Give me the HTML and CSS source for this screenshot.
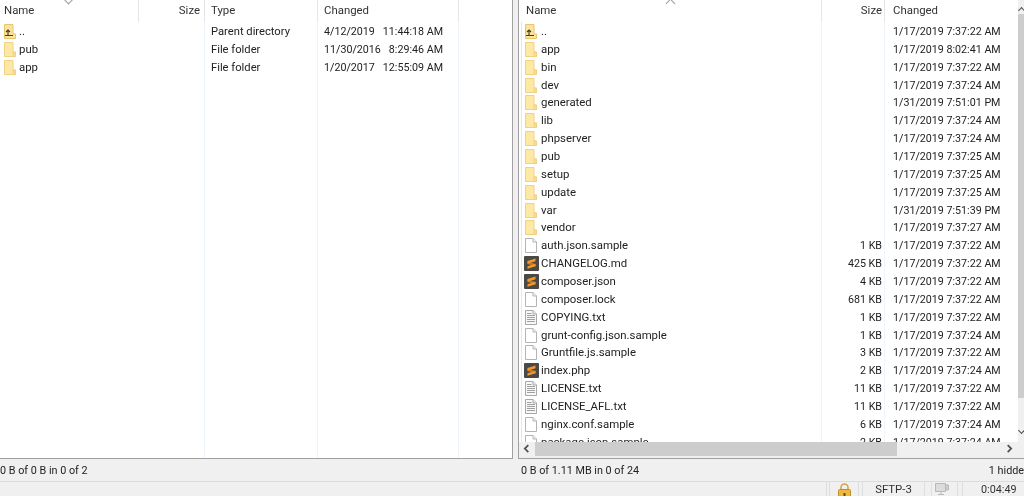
FILE: index.html
```html
<!DOCTYPE html>
<html lang="en">
<head>
  <meta charset="UTF-8" />
  <title>WinSCP</title>
  <link rel="stylesheet" href="styles.css">
</head>
<body>
<svg class="defs" width="0" height="0">
  <symbol id="folder" viewBox="0 0 15 15">
    <path d="M1.5.5h8.5v9.5h2.5v4.5h-11z" fill="#fde9a3" stroke="#f0d186"/>
    <path d="M10 10h2.5v4.5H10z" fill="#f8dd92" stroke="#f0d186"/>
  </symbol>
  <symbol id="folder-up" viewBox="0 0 15 15">
    <path d="M1.5.5h8.5v9.5h2.5v4.5h-11z" fill="#fde3a0" stroke="#e8c46c"/>
    <path d="M2 11.5h8M5 11.5V6M3 8l2-2 2 2" fill="none" stroke="#4a3a18" stroke-width="1.1"/>
  </symbol>
  <symbol id="file" viewBox="0 0 15 15">
    <path d="M1.5.5h7.5l3.5 3.5v10.500h-11z" fill="#fff" stroke="#b4b4b4"/>
    <path d="M9 .5V4h3.500" fill="#f2f2f2" stroke="#b4b4b4"/>
  </symbol>
  <symbol id="text" viewBox="0 0 15 15">
    <path d="M1.5.5h7.5l3.5 3.5v10.500h-11z" fill="#f8f8f8" stroke="#a8a8a8"/>
    <path d="M9 .5V4h3.500" fill="#eee" stroke="#a8a8a8"/>
    <path d="M3 3.500h4.500M3 5.500h8M3 7.500h8M3 9.500h8M3 11.500h8" stroke="#a0a0a0"/>
  </symbol>
  <symbol id="sublime" viewBox="0 0 15 15">
    <rect width="15" height="15" rx="1" fill="#4b4946"/>
    <path d="M3.500 5.500l8 2.500v2.400l-8-2.400z" fill="#c9771c"/>
    <path d="M3.500 5 11.500 2.500v2.700l-8 2.500zM11.500 7.800v2.400l-8 2.500v-2.500z" fill="#f3982c"/>
  </symbol>
  <symbol id="chev-left" viewBox="0 0 16 16">
    <path d="M9.500 3.500 5.500 7.500l4 4" fill="none" stroke="#505050" stroke-width="2"/>
  </symbol>
  <symbol id="chev-right" viewBox="0 0 16 16">
    <path d="M6.500 3.500l4 4-4 4" fill="none" stroke="#505050" stroke-width="2"/>
  </symbol>
</svg>

<div class="panels">
  <section class="pane pane-left">
    <span class="sort-caret"></span>
    <div class="head">
      <div class="col name">Name</div>
      <div class="col size">Size</div>
      <div class="col type">Type</div>
      <div class="col changed">Changed</div>
      <div class="col rest"></div>
    </div>
    <div class="list">
      <div class="row"><svg class="ico"><use href="#folder-up"/></svg><span class="name">..</span><span class="size"></span><span class="type">Parent directory</span><span class="changed">4/12/2019&nbsp;&nbsp; 11:44:18 AM</span></div>
      <div class="row"><svg class="ico"><use href="#folder"/></svg><span class="name">pub</span><span class="size"></span><span class="type">File folder</span><span class="changed">11/30/2016&nbsp;&nbsp; 8:29:46 AM</span></div>
      <div class="row"><svg class="ico"><use href="#folder"/></svg><span class="name">app</span><span class="size"></span><span class="type">File folder</span><span class="changed">1/20/2017&nbsp;&nbsp; 12:55:09 AM</span></div>
    </div>
  </section>

  <section class="pane pane-right">
    <span class="sort-caret"></span>
    <div class="main">
      <div class="head">
        <div class="col name">Name</div>
        <div class="col size">Size</div>
        <div class="col changed">Changed</div>
      </div>
      <div class="list">
        <div class="row"><svg class="ico"><use href="#folder-up"/></svg><span class="name">..</span><span class="size"></span><span class="changed">1/17/2019 7:37:22 AM</span></div>
        <div class="row"><svg class="ico"><use href="#folder"/></svg><span class="name">app</span><span class="size"></span><span class="changed">1/17/2019 8:02:41 AM</span></div>
        <div class="row"><svg class="ico"><use href="#folder"/></svg><span class="name">bin</span><span class="size"></span><span class="changed">1/17/2019 7:37:22 AM</span></div>
        <div class="row"><svg class="ico"><use href="#folder"/></svg><span class="name">dev</span><span class="size"></span><span class="changed">1/17/2019 7:37:24 AM</span></div>
        <div class="row"><svg class="ico"><use href="#folder"/></svg><span class="name">generated</span><span class="size"></span><span class="changed">1/31/2019 7:51:01 PM</span></div>
        <div class="row"><svg class="ico"><use href="#folder"/></svg><span class="name">lib</span><span class="size"></span><span class="changed">1/17/2019 7:37:24 AM</span></div>
        <div class="row"><svg class="ico"><use href="#folder"/></svg><span class="name">phpserver</span><span class="size"></span><span class="changed">1/17/2019 7:37:24 AM</span></div>
        <div class="row"><svg class="ico"><use href="#folder"/></svg><span class="name">pub</span><span class="size"></span><span class="changed">1/17/2019 7:37:25 AM</span></div>
        <div class="row"><svg class="ico"><use href="#folder"/></svg><span class="name">setup</span><span class="size"></span><span class="changed">1/17/2019 7:37:25 AM</span></div>
        <div class="row"><svg class="ico"><use href="#folder"/></svg><span class="name">update</span><span class="size"></span><span class="changed">1/17/2019 7:37:25 AM</span></div>
        <div class="row"><svg class="ico"><use href="#folder"/></svg><span class="name">var</span><span class="size"></span><span class="changed">1/31/2019 7:51:39 PM</span></div>
        <div class="row"><svg class="ico"><use href="#folder"/></svg><span class="name">vendor</span><span class="size"></span><span class="changed">1/17/2019 7:37:27 AM</span></div>
        <div class="row"><svg class="ico"><use href="#file"/></svg><span class="name">auth.json.sample</span><span class="size">1 KB</span><span class="changed">1/17/2019 7:37:22 AM</span></div>
        <div class="row"><svg class="ico"><use href="#sublime"/></svg><span class="name">CHANGELOG.md</span><span class="size">425 KB</span><span class="changed">1/17/2019 7:37:22 AM</span></div>
        <div class="row"><svg class="ico"><use href="#sublime"/></svg><span class="name">composer.json</span><span class="size">4 KB</span><span class="changed">1/17/2019 7:37:22 AM</span></div>
        <div class="row"><svg class="ico"><use href="#file"/></svg><span class="name">composer.lock</span><span class="size">681 KB</span><span class="changed">1/17/2019 7:37:22 AM</span></div>
        <div class="row"><svg class="ico"><use href="#text"/></svg><span class="name">COPYING.txt</span><span class="size">1 KB</span><span class="changed">1/17/2019 7:37:22 AM</span></div>
        <div class="row"><svg class="ico"><use href="#file"/></svg><span class="name">grunt-config.json.sample</span><span class="size">1 KB</span><span class="changed">1/17/2019 7:37:24 AM</span></div>
        <div class="row"><svg class="ico"><use href="#file"/></svg><span class="name">Gruntfile.js.sample</span><span class="size">3 KB</span><span class="changed">1/17/2019 7:37:22 AM</span></div>
        <div class="row"><svg class="ico"><use href="#sublime"/></svg><span class="name">index.php</span><span class="size">2 KB</span><span class="changed">1/17/2019 7:37:24 AM</span></div>
        <div class="row"><svg class="ico"><use href="#text"/></svg><span class="name">LICENSE.txt</span><span class="size">11 KB</span><span class="changed">1/17/2019 7:37:22 AM</span></div>
        <div class="row"><svg class="ico"><use href="#text"/></svg><span class="name">LICENSE_AFL.txt</span><span class="size">11 KB</span><span class="changed">1/17/2019 7:37:22 AM</span></div>
        <div class="row"><svg class="ico"><use href="#file"/></svg><span class="name">nginx.conf.sample</span><span class="size">6 KB</span><span class="changed">1/17/2019 7:37:24 AM</span></div>
        <div class="row"><svg class="ico"><use href="#file"/></svg><span class="name">package.json.sample</span><span class="size">2 KB</span><span class="changed">1/17/2019 7:37:24 AM</span></div>
      </div>
      <div class="hscroll">
        <svg class="arrow"><use href="#chev-left"/></svg>
        <div class="hthumb"></div>
        <svg class="arrow arrow-right"><use href="#chev-right"/></svg>
      </div>
    </div>
    <div class="vscroll">
      <span class="vcaret vcaret-up"></span>
      <div class="vthumb"></div>
      <span class="vcaret vcaret-down"></span>
    </div>
  </section>
</div>

<div class="summary">
  <div class="summary-left">0 B of 0 B in 0 of 2</div>
  <div class="summary-right">
    <span>0 B of 1.11 MB in 0 of 24</span>
    <span class="hidden-count">1 hidden</span>
  </div>
</div>

<div class="statusbar">
  <div class="cell cell-blank"></div>
  <div class="cell cell-lock">
    <svg width="13" height="16" viewBox="0 0 13 16">
      <path d="M3 7V4.500a3.500 3.500 0 0 1 7 0V7" fill="none" stroke="#d9a441" stroke-width="1.600"/>
      <rect x=".5" y="6.500" width="12" height="9" rx="1" fill="#eeb93f" stroke="#c08f2c"/>
      <rect x="5.500" y="10" width="2" height="3" fill="#6b4d12"/>
    </svg>
  </div>
  <div class="cell cell-proto">SFTP-3</div>
  <div class="cell cell-net">
    <svg width="14" height="16" viewBox="0 0 14 16">
      <path d="M.5.5h10v8H.5z" fill="#dcdcdc" stroke="#b8b8b8"/>
      <path d="M10.500 2h3v5h-3zM6 8.500v3M3 11.500h6" fill="#cfcfcf" stroke="#b8b8b8"/>
    </svg>
  </div>
  <div class="cell cell-time">0:04:49</div>
</div>
</body>
</html>
```

FILE: styles.css
```css
* {
  box-sizing: border-box;
}

body {
  margin: 0;
  width: 1024px;
  height: 496px;
  overflow: hidden;
  display: flex;
  flex-direction: column;
  background: #f0f0f0;
  color: #222;
  font-family: Roboto, "Noto Sans", sans-serif;
  font-size: 11.4px;
  filter: blur(0.3px);
}

.defs {
  position: absolute;
}

.panels {
  height: 459px;
  display: flex;
  gap: 5px;
  flex: none;
}

.pane {
  position: relative;
  display: flex;
  background: #fff;
  border-bottom: 1px solid #a0a0a0;
  overflow: hidden;
}

.pane-left {
  width: 513px;
  flex-direction: column;
  border-right: 1px solid #a0a0a0;
}

.pane-right {
  flex: 1;
  border-left: 1px solid #a0a0a0;
}

.main {
  flex: 1;
  min-width: 0;
  display: flex;
  flex-direction: column;
}

.head {
  height: 22px;
  flex: none;
  display: flex;
  color: #333;
}

.col {
  line-height: 20px;
  border-right: 1px solid #e5e5e5;
}

.list {
  flex: 1;
  min-height: 0;
  padding-top: 0.5px;
  overflow: hidden;
}

.row {
  height: 17.86px;
  display: flex;
  align-items: center;
  line-height: 17px;
  white-space: nowrap;
}

.row span {
  display: block;
}

.row .size,
.row .changed {
  font-size: 10.7px;
}

.row .type {
  font-size: 11.2px;
}

.ico {
  width: 15px;
  height: 15px;
  flex: none;
}

/* left panel columns */
.pane-left .head .name { width: 139px; padding-left: 4px; }
.pane-left .head .size { width: 66px; padding-right: 4px; text-align: right; }
.pane-left .head .type { width: 113px; padding-left: 6px; }
.pane-left .head .changed { width: 141px; padding-left: 6px; }
.pane-left .head .rest { flex: 1; border-right: 0; }

.pane-left .row { padding-left: 3px; }
.pane-left .row .name { width: 121px; padding-left: 1px; }
.pane-left .row .size { width: 66px; }
.pane-left .row .type { width: 113px; padding-left: 6px; }
.pane-left .row .changed { padding-left: 6px; }

.pane-left .list {
  background:
    linear-gradient(#eef4fb, #eef4fb) 204px 0 / 1px 100% no-repeat,
    linear-gradient(#eef4fb, #eef4fb) 317px 0 / 1px 100% no-repeat,
    linear-gradient(#eef4fb, #eef4fb) 458px 0 / 1px 100% no-repeat;
}

/* right panel columns */
.pane-right .head .name { width: 303px; padding-left: 7px; }
.pane-right .head .size { width: 63px; padding-right: 2px; text-align: right; }
.pane-right .head .changed { flex: 1; padding-left: 8px; border-right: 0; }

.pane-right .row { padding-left: 5px; }
.pane-right .row .name { width: 283px; padding-left: 2px; }
.pane-right .row .size { width: 63px; padding-right: 3px; text-align: right; }
.pane-right .row .changed { padding-left: 8px; }

.pane-right .list {
  background:
    linear-gradient(#dce9f7, #dce9f7) 2px 0 / 1px 100% no-repeat,
    linear-gradient(#eef4fb, #eef4fb) 302px 0 / 1px 100% no-repeat,
    linear-gradient(#eef4fb, #eef4fb) 365px 0 / 1px 100% no-repeat;
}

.sort-caret {
  position: absolute;
  top: -4px;
  width: 7px;
  height: 7px;
  border-right: 1px solid #9a9a9a;
  border-bottom: 1px solid #9a9a9a;
  transform: rotate(45deg);
}

.pane-left .sort-caret { left: 65px; }

.pane-right .sort-caret {
  left: 148px;
  top: 0;
  transform: rotate(225deg);
}

.hscroll {
  height: 16px;
  flex: none;
  display: flex;
  background: #f0f0f0;
}

.arrow {
  width: 16px;
  height: 14px;
  flex: none;
}

.hthumb {
  width: 362px;
  height: 14px;
  background: #cdcdcd;
}

.arrow-right {
  margin-left: auto;
  margin-right: 1px;
}

.vscroll {
  position: relative;
  width: 6px;
  flex: none;
  padding-top: 14px;
  background: #f0f0f0;
}

.vthumb {
  height: 384px;
  background: #cdcdcd;
}

.vcaret {
  position: absolute;
  right: 0;
  width: 5px;
  height: 5px;
  border-left: 1.5px solid #505050;
  border-top: 1.5px solid #505050;
}

.vcaret-up { top: 8px; transform: rotate(45deg); }
.vcaret-down { top: 428px; transform: rotate(225deg); }

.summary {
  height: 23px;
  flex: none;
  display: flex;
  gap: 5px;
  font-size: 10.8px;
  line-height: 23px;
  border-bottom: 1px solid #dcdcdc;
}

.summary-left {
  width: 513px;
}

.summary-right {
  flex: 1;
  min-width: 0;
  display: flex;
  justify-content: space-between;
  padding-left: 3px;
  white-space: nowrap;
}

.hidden-count {
  margin-right: -6px;
}

.statusbar {
  flex: 1;
  min-height: 0;
  display: flex;
  overflow: hidden;
  color: #333;
}

.cell {
  flex: none;
  overflow: hidden;
  line-height: 15px;
  text-align: center;
  border-left: 1px solid #dedede;
  border-right: 1px solid #dedede;
}

.cell svg {
  display: block;
  margin: 1px auto 0;
}

.cell-blank { width: 827px; border-left: 0; }
.cell-lock { width: 30px; margin-left: 2px; }
.cell-proto { width: 63px; margin-left: 3px; }
.cell-net { width: 27px; margin-left: 6px; }
.cell-net svg { margin-left: 3px; }
.cell-time { width: 63px; margin-left: 4px; padding-left: 18px; text-align: left; border-right: 0; font-size: 10.8px; }
```
